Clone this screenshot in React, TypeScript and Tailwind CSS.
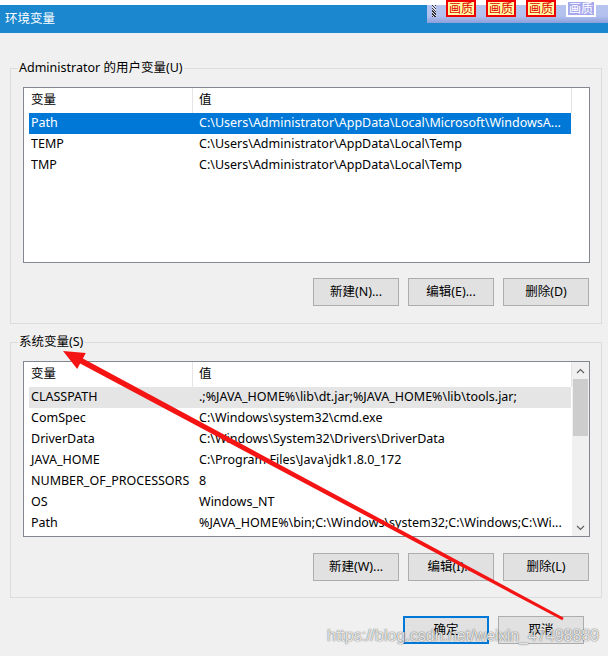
import React from 'react';

type Row = { name: string; value: string };

const USER_VARS: Row[] = [
  { name: 'Path', value: 'C:\\Users\\Administrator\\AppData\\Local\\Microsoft\\WindowsA...' },
  { name: 'TEMP', value: 'C:\\Users\\Administrator\\AppData\\Local\\Temp' },
  { name: 'TMP', value: 'C:\\Users\\Administrator\\AppData\\Local\\Temp' },
];

const SYSTEM_VARS: Row[] = [
  { name: 'CLASSPATH', value: '.;%JAVA_HOME%\\lib\\dt.jar;%JAVA_HOME%\\lib\\tools.jar;' },
  { name: 'ComSpec', value: 'C:\\Windows\\system32\\cmd.exe' },
  { name: 'DriverData', value: 'C:\\Windows\\System32\\Drivers\\DriverData' },
  { name: 'JAVA_HOME', value: 'C:\\Program Files\\Java\\jdk1.8.0_172' },
  { name: 'NUMBER_OF_PROCESSORS', value: '8' },
  { name: 'OS', value: 'Windows_NT' },
  { name: 'Path', value: '%JAVA_HOME%\\bin;C:\\Windows\\system32;C:\\Windows;C:\\Wi...' },
];

const Badge = ({ dim }: { dim?: boolean }) => (
  <div
    className={
      dim
        ? 'w-[30px] h-[17px] border-[2px] border-white bg-[#a6a8ee] text-white text-[12px] leading-[13px] flex items-center justify-center'
        : 'w-[30px] h-[17px] border-[2px] border-[#f00000] bg-[#ffffa6] text-[#e00000] text-[12px] leading-[13px] flex items-center justify-center'
    }
  >
    画质
  </div>
);

const ListHeader = () => (
  <div className="flex h-[25px] items-center">
    <div className="w-[163px] pl-[2px]">变量</div>
    <div className="w-px h-full bg-[#e5e5e5]" />
    <div className="w-[378px] pl-[6px]">值</div>
    <div className="w-px h-full bg-[#e5e5e5]" />
  </div>
);

const ListRow = ({ row, tone }: { row: Row; tone?: 'active' | 'inactive' }) => {
  const bg =
    tone === 'active' ? 'bg-[#0078d7] text-white' : tone === 'inactive' ? 'bg-[#e5e5e5]' : '';
  return (
    <div className={`flex h-[21px] items-center w-[542px] ${bg}`}>
      <div className="w-[163px] pl-[2px] whitespace-nowrap overflow-hidden">{row.name}</div>
      <div className="w-[379px] pl-[7px] whitespace-nowrap overflow-hidden text-ellipsis">{row.value}</div>
    </div>
  );
};

const Chevron = ({ down }: { down?: boolean }) => (
  <svg width="9" height="6" viewBox="0 0 9 6">
    <polyline
      points={down ? '1,1 4.5,4.5 8,1' : '1,5 4.5,1.5 8,5'}
      fill="none"
      stroke="#606060"
      strokeWidth="1.2"
    />
  </svg>
);

const Btn = ({ label, primary }: { label: string; primary?: boolean }) => (
  <div
    className={
      primary
        ? 'w-[86px] h-[28px] bg-[#e1e1e1] border-[2px] border-[#0078d7] flex items-center justify-center'
        : 'w-[86px] h-[28px] bg-[#e1e1e1] border border-[#adadad] flex items-center justify-center'
    }
  >
    {label}
  </div>
);

export default function App() {
  return (
    <div className="relative w-[608px] h-[656px] overflow-hidden bg-[#f0f0f0] text-black text-[12.5px] font-['Noto_Sans','Noto_Sans_CJK_SC',sans-serif]">
      {/* window title */}
      <div className="h-[5px] bg-white" />
      <div className="h-[28px] bg-[#1a87cf] flex items-center pl-[5px] text-white text-[12.5px]">环境变量</div>

      <div className="pl-[10px] pr-[6px]">
        {/* user variables */}
        <div className="mt-[35px] border border-[#dcdcdc] pb-[17px]">
          <div className="-mt-[9px] ml-[7px] px-px w-fit bg-[#f0f0f0] leading-[16px]">Administrator 的用户变量(U)</div>
          <div className="mt-[11px] ml-[12px] w-[567px] h-[176px] border border-[#828790] bg-white pl-[5px]">
            <ListHeader />
            {USER_VARS.map((r, i) => (
              <ListRow key={r.name} row={r} tone={i === 0 ? 'active' : undefined} />
            ))}
          </div>
          <div className="mt-[15px] flex justify-end gap-[9px] pr-[12px]">
            <Btn label="新建(N)..." />
            <Btn label="编辑(E)..." />
            <Btn label="删除(D)" />
          </div>
        </div>

        {/* system variables */}
        <div className="mt-[18px] border border-[#dcdcdc] pb-[16px]">
          <div className="-mt-[9px] ml-[7px] px-px w-fit bg-[#f0f0f0] leading-[16px]">系统变量(S)</div>
          <div className="mt-[11px] ml-[12px] w-[567px] h-[176px] border border-[#828790] bg-white flex overflow-hidden">
            <div className="pl-[5px] w-[548px]">
              <ListHeader />
              {SYSTEM_VARS.map((r, i) => (
                <ListRow key={r.name + i} row={r} tone={i === 0 ? 'inactive' : undefined} />
              ))}
            </div>
            <div className="w-[17px] bg-[#f0f0f0] flex flex-col">
              <div className="h-[17px] flex items-center justify-center">
                <Chevron />
              </div>
              <div className="h-[57px] mx-px bg-[#cdcdcd]" />
              <div className="flex-1" />
              <div className="h-[17px] flex items-center justify-center">
                <Chevron down />
              </div>
            </div>
          </div>
          <div className="mt-[16px] flex justify-end gap-[9px] pr-[12px]">
            <Btn label="新建(W)..." />
            <Btn label="编辑(I)..." />
            <Btn label="删除(L)" />
          </div>
        </div>
      </div>

      <div className="mt-[18px] flex justify-end gap-[9px] pr-[24px]">
        <Btn label="确定" primary />
        <Btn label="取消" />
      </div>

      {/* toolbar strip docked over the title bar */}
      <div className="absolute left-[427px] top-[5px] w-[181px] h-[18px] bg-[linear-gradient(#b6c4ef_0%,#b3c1ee_60%,#8c9fda_100%)]">
        <div className="absolute left-[5px] top-0 w-[4px] h-[12px] bg-[repeating-linear-gradient(45deg,#333_0_1px,#d8def5_1px_2px)]" />
      </div>
      <div className="absolute left-[446px] top-0 flex gap-[10px]">
        <Badge />
        <Badge />
        <Badge />
        <Badge dim />
      </div>

      {/* red annotation arrow */}
      <svg className="absolute left-0 top-0 pointer-events-none" width="608" height="656" viewBox="0 0 608 656">
        <polygon
          points="63,351 85.8,353.1 82.9,358.4 563.7,617.7 562.3,620.3 80.1,363.6 77.2,368.9"
          fill="#f41414"
        />
      </svg>

      <div className="absolute left-[327px] top-[627px] text-[16px] leading-[18px] font-['Liberation_Sans',sans-serif] text-[rgba(255,255,255,0.85)] [text-shadow:0_0_1px_rgba(0,0,0,0.6),0_0_2px_rgba(0,0,0,0.25)] whitespace-nowrap">
        https://blog.csdn.net/weixin_47498889
      </div>
    </div>
  );
}
